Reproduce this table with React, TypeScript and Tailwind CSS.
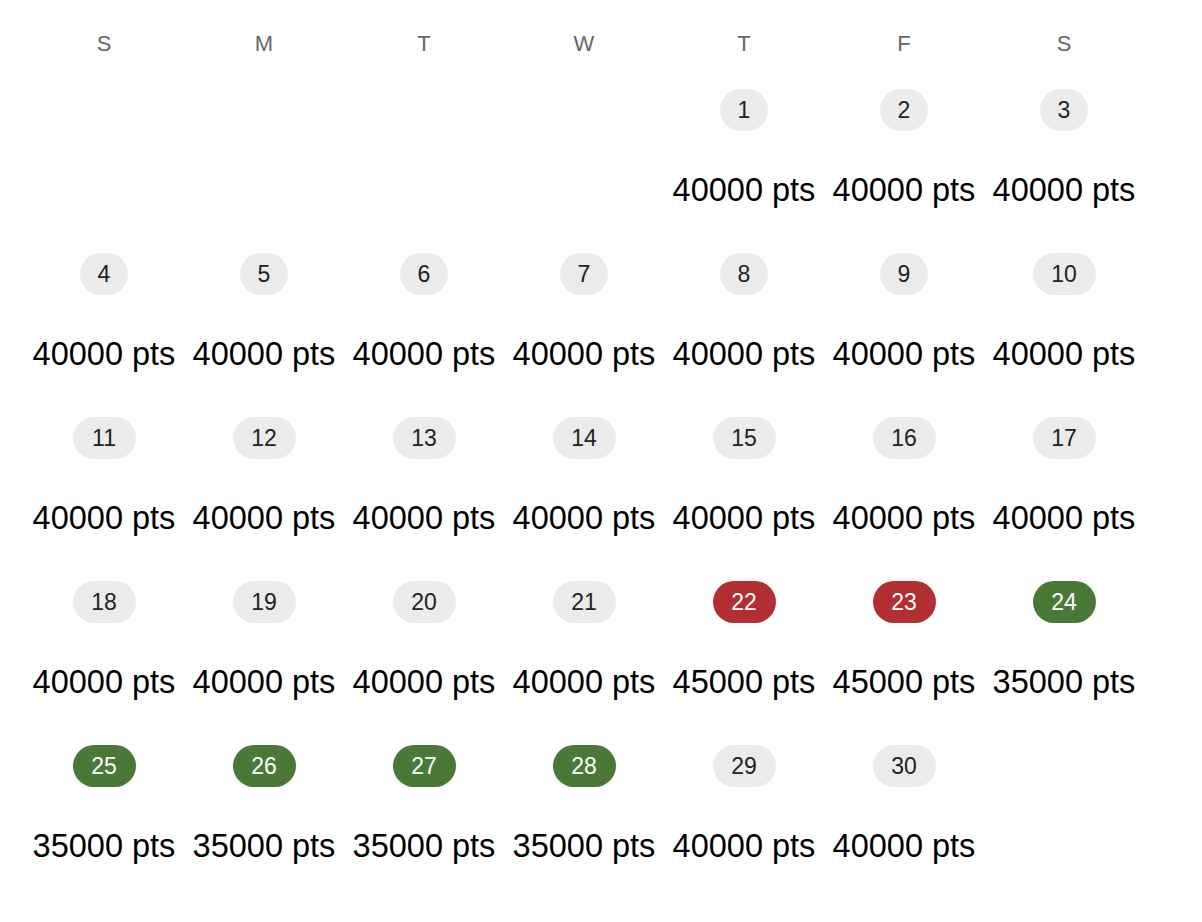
const DAYS = ["S", "M", "T", "W", "T", "F", "S"];

type Tone = "plain" | "peak" | "low";

type Day = { date: number; pts: number; tone: Tone };

const FIRST_WEEKDAY = 4;

const days: Day[] = Array.from({ length: 30 }, (_, i) => {
  const date = i + 1;
  if (date === 22 || date === 23) return { date, pts: 45000, tone: "peak" };
  if (date >= 24 && date <= 28) return { date, pts: 35000, tone: "low" };
  return { date, pts: 40000, tone: "plain" };
});

const cells: (Day | null)[] = [
  ...Array.from({ length: FIRST_WEEKDAY }, () => null),
  ...days,
];
while (cells.length % 7 !== 0) cells.push(null);

const pillTone: Record<Tone, string> = {
  plain: "bg-[#ebebeb] text-[#222222]",
  peak: "bg-[#b32e33] text-white",
  low: "bg-[#4a7836] text-white",
};

function DayCell({ day }: { day: Day | null }) {
  if (!day) return <div className="h-[164px]" />;
  const width = day.date < 10 ? "w-[48px]" : "w-[63px]";
  return (
    <div className="flex h-[164px] flex-col items-center pt-[27px]">
      <span
        className={`flex h-[42px] items-center justify-center rounded-full text-[23px] ${width} ${pillTone[day.tone]}`}
      >
        {day.date}
      </span>
      <span className="mt-[39px] whitespace-nowrap text-[32.5px] leading-[40px] text-black">
        {day.pts} pts
      </span>
    </div>
  );
}

export default function App() {
  return (
    <main
      className="min-h-screen bg-white pl-6 pt-6"
      style={{ fontFamily: '"Liberation Sans", Arial, sans-serif' }}
    >
      <div className="grid w-[1120px] grid-cols-7">
        {DAYS.map((d, i) => (
          <div
            key={i}
            className="flex h-[38px] items-center justify-center text-[22px] text-[#666666]"
          >
            {d}
          </div>
        ))}
        {cells.map((day, i) => (
          <DayCell key={i} day={day} />
        ))}
      </div>
    </main>
  );
}
